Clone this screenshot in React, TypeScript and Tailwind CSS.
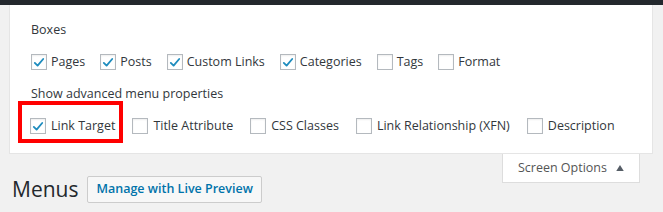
const boxes = [
  { label: 'Pages', checked: true },
  { label: 'Posts', checked: true },
  { label: 'Custom Links', checked: true },
  { label: 'Categories', checked: true },
  { label: 'Tags', checked: false },
  { label: 'Format', checked: false },
];

const advanced = [
  { label: 'Link Target', checked: true },
  { label: 'Title Attribute', checked: false },
  { label: 'CSS Classes', checked: false },
  { label: 'Link Relationship (XFN)', checked: false },
  { label: 'Description', checked: false },
];

function Box({ checked }: { checked: boolean }) {
  return (
    <span className="w-4 h-4 shrink-0 border border-[#b4b9be] bg-white flex items-center justify-center shadow-[inset_0_1px_2px_rgba(0,0,0,0.07)]">
      {checked && (
        <svg viewBox="0 0 20 20" className="w-[15px] h-[15px]">
          <path d="M4 10.5 L8 14.5 L16 5" fill="none" stroke="#1e8cbe" strokeWidth="2.6" strokeLinecap="round" strokeLinejoin="round" />
        </svg>
      )}
    </span>
  );
}

function Item({ label, checked, wide, marked }: { label: string; checked: boolean; wide?: boolean; marked?: boolean }) {
  return (
    <label className={wide ? 'relative flex items-center gap-[5px] mr-[17px]' : 'relative flex items-center gap-[4px] mr-[15px]'}>
      <Box checked={checked} />
      <span>{label}</span>
      {marked && <span className="absolute left-[-12px] -top-[16px] w-[105px] h-[42px] border-4 border-[#ff0000]" />}
    </label>
  );
}

export default function App() {
  return (
    <div className="w-[663px] h-[212px] bg-[#f1f1f1] overflow-hidden text-[12.5px] text-[#32373c]" style={{ fontFamily: '"Open Sans", "Noto Sans", sans-serif' }}>
      <div className="h-[5px] bg-[#23282d]" />
      <div className="ml-[9px] mr-[10px] bg-white border border-t-0 border-[#e5e5e5] pl-[21px] pt-[16px] pb-[18px]">
        <div className="leading-[18px] mb-[14px]">Boxes</div>
        <div className="flex items-center h-[18px]">
          {boxes.map((b) => <Item key={b.label} {...b} />)}
        </div>
        <div className="leading-[18px] mt-[14px] mb-[14px]">Show advanced menu properties</div>
        <div className="flex items-center h-[18px] -ml-px">
          {advanced.map((b, i) => <Item key={b.label} {...b} wide marked={i === 0} />)}
        </div>
      </div>
      <div className="flex justify-end mr-[23px]">
        <div className="h-[29px] bg-white border border-t-0 border-[#ddd] pl-[15px] pr-[15px] flex items-center gap-[9px] text-[#555]">
          <span>Screen Options</span>
          <svg viewBox="0 0 10 8" className="w-[8px] h-[6px]"><path d="M0 8 L5 0 L10 8 Z" fill="#555d66" /></svg>
        </div>
      </div>
      <div className="flex items-center pl-[12px] -mt-[8px] gap-[9px]">
        <h1 className="text-[21px] leading-[29px] text-[#23282d]">Menus</h1>
        <button className="h-[27px] px-[8px] border border-[#ccc] rounded-[2px] bg-[#f7f7f7] text-[#0073aa] font-semibold text-[12.5px]">Manage with Live Preview</button>
      </div>
    </div>
  );
}
